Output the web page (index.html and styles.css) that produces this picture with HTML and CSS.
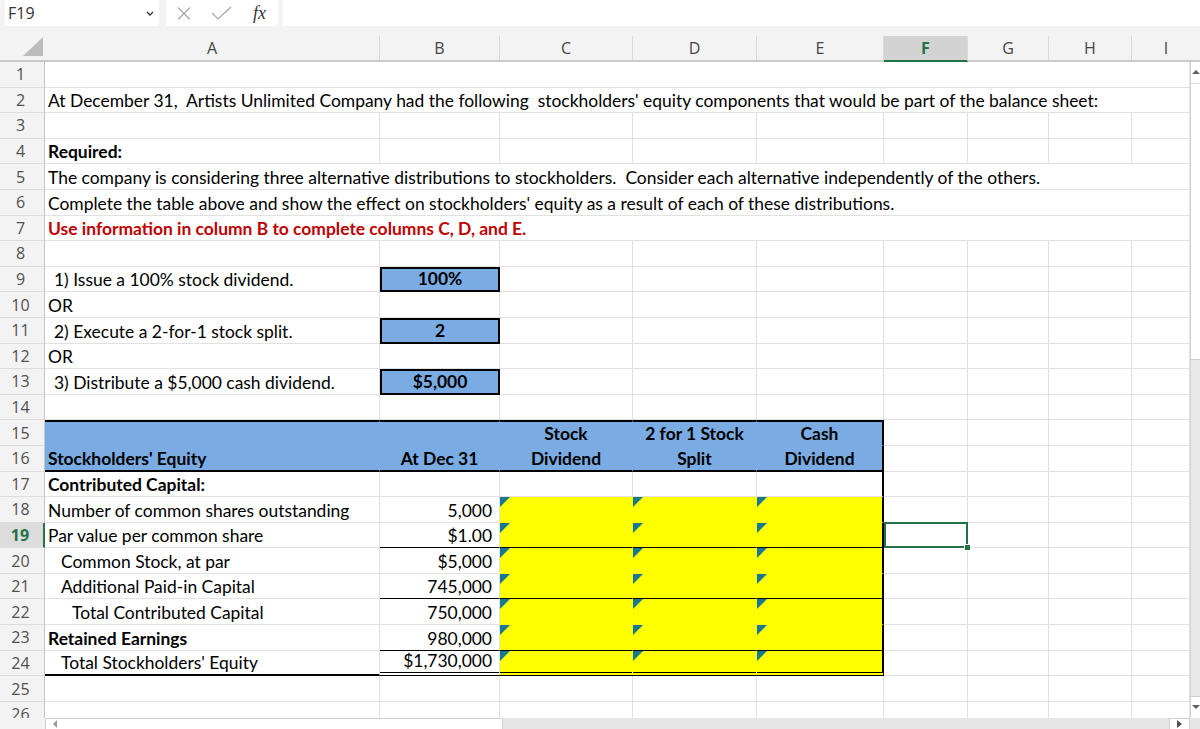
FILE: index.html
```html
<!DOCTYPE html>
<html>
<head>
<meta charset="utf-8">
<link rel="stylesheet" href="styles.css">
</head>
<body>
<div class="app">
  <div class="fbar">
    <div class="namebox"><span>F19</span><svg class="chev" width="8" height="5" viewBox="0 0 8 5"><polyline points="1,1 4,4 7,1" fill="none" stroke="#333" stroke-width="1.4"/></svg></div>
    <div class="fbtns">
      <svg class="ic-x" width="14" height="13" viewBox="0 0 14 13"><line x1="1" y1="0.5" x2="13" y2="12.5" stroke="#a6a6a6" stroke-width="1.2"/><line x1="13" y1="0.5" x2="1" y2="12.5" stroke="#a6a6a6" stroke-width="1.2"/></svg>
      <svg class="ic-ok" width="21" height="14" viewBox="0 0 21 14"><polyline points="1,7 7,13 20,1" fill="none" stroke="#a6a6a6" stroke-width="1.2"/></svg>
      <span class="fx">fx</span>
    </div>
    <div class="finput"></div>
  </div>
  <div class="colhead">
    <div class="corner"><span class="ctri"></span></div>
    <div class="ch">A</div><div class="ch">B</div><div class="ch">C</div><div class="ch">D</div><div class="ch">E</div><div class="ch sel">F</div><div class="ch">G</div><div class="ch">H</div><div class="ch last">I</div>
  </div>
  <div class="body">
    <div class="sheet">
      <div class="row"><div class="rh">1</div><div class="c s9"></div></div>
      <div class="row"><div class="rh">2</div><div class="c s9">At December 31,  Artists Unlimited Company had the following  stockholders' equity components that would be part of the balance sheet:</div></div>
      <div class="row"><div class="rh">3</div><div class="c"></div><div class="c"></div><div class="c"></div><div class="c"></div><div class="c"></div><div class="c"></div><div class="c"></div><div class="c"></div><div class="c"></div></div>
      <div class="row"><div class="rh">4</div><div class="c b">Required:</div><div class="c"></div><div class="c"></div><div class="c"></div><div class="c"></div><div class="c"></div><div class="c"></div><div class="c"></div><div class="c"></div></div>
      <div class="row"><div class="rh">5</div><div class="c s9">The company is considering three alternative distributions to stockholders.  Consider each alternative independently of the others.</div></div>
      <div class="row"><div class="rh">6</div><div class="c s9">Complete the table above and show the effect on stockholders' equity as a result of each of these distributions.</div></div>
      <div class="row"><div class="rh">7</div><div class="c s9 b red">Use information in column B to complete columns C, D, and E.</div></div>
      <div class="row"><div class="rh">8</div><div class="c"></div><div class="c"></div><div class="c"></div><div class="c"></div><div class="c"></div><div class="c"></div><div class="c"></div><div class="c"></div><div class="c"></div></div>
      <div class="row"><div class="rh">9</div><div class="c p1">1) Issue a 100% stock dividend.</div><div class="c box ctr b">100%</div><div class="c"></div><div class="c"></div><div class="c"></div><div class="c"></div><div class="c"></div><div class="c"></div><div class="c"></div></div>
      <div class="row"><div class="rh">10</div><div class="c">OR</div><div class="c"></div><div class="c"></div><div class="c"></div><div class="c"></div><div class="c"></div><div class="c"></div><div class="c"></div><div class="c"></div></div>
      <div class="row"><div class="rh">11</div><div class="c p1">2) Execute a 2-for-1 stock split.</div><div class="c box ctr b">2</div><div class="c"></div><div class="c"></div><div class="c"></div><div class="c"></div><div class="c"></div><div class="c"></div><div class="c"></div></div>
      <div class="row"><div class="rh">12</div><div class="c">OR</div><div class="c"></div><div class="c"></div><div class="c"></div><div class="c"></div><div class="c"></div><div class="c"></div><div class="c"></div><div class="c"></div></div>
      <div class="row"><div class="rh">13</div><div class="c p1">3) Distribute a $5,000 cash dividend.</div><div class="c box ctr b">$5,000</div><div class="c"></div><div class="c"></div><div class="c"></div><div class="c"></div><div class="c"></div><div class="c"></div><div class="c"></div></div>
      <div class="row"><div class="rh">14</div><div class="c"></div><div class="c"></div><div class="c"></div><div class="c"></div><div class="c"></div><div class="c"></div><div class="c"></div><div class="c"></div><div class="c"></div></div>
      <div class="row"><div class="rh">15</div><div class="c bl bt2"></div><div class="c bl bt2"></div><div class="c bl bt2 ctr hd">Stock</div><div class="c bl bt2 ctr hd">2 for 1 Stock</div><div class="c bl bt2 br2 ctr hd">Cash</div><div class="c"></div><div class="c"></div><div class="c"></div><div class="c"></div></div>
      <div class="row"><div class="rh">16</div><div class="c bl bb2 b">Stockholders' Equity</div><div class="c bl bb2 ctr hd">At Dec 31</div><div class="c bl bb2 ctr hd">Dividend</div><div class="c bl bb2 ctr hd">Split</div><div class="c bl bb2 br2 ctr hd">Dividend</div><div class="c"></div><div class="c"></div><div class="c"></div><div class="c"></div></div>
      <div class="row"><div class="rh">17</div><div class="c b">Contributed Capital:</div><div class="c"></div><div class="c"></div><div class="c"></div><div class="c br2"></div><div class="c"></div><div class="c"></div><div class="c"></div><div class="c"></div></div>
      <div class="row"><div class="rh">18</div><div class="c">Number of common shares outstanding</div><div class="c num">5,000</div><div class="c y t"></div><div class="c y t"></div><div class="c y t br2"></div><div class="c"></div><div class="c"></div><div class="c"></div><div class="c"></div></div>
      <div class="row"><div class="rh sel">19</div><div class="c">Par value per common share</div><div class="c num bb1">$1.00</div><div class="c y t bb1"></div><div class="c y t bb1"></div><div class="c y t bb1 br2"></div><div class="c cur"><span class="handle"></span></div><div class="c"></div><div class="c"></div><div class="c"></div></div>
      <div class="row"><div class="rh">20</div><div class="c p2">Common Stock, at par</div><div class="c num">$5,000</div><div class="c y t"></div><div class="c y t"></div><div class="c y t br2"></div><div class="c"></div><div class="c"></div><div class="c"></div><div class="c"></div></div>
      <div class="row"><div class="rh">21</div><div class="c p2">Additional Paid-in Capital</div><div class="c num bb1">745,000</div><div class="c y t bb1"></div><div class="c y t bb1"></div><div class="c y t bb1 br2"></div><div class="c"></div><div class="c"></div><div class="c"></div><div class="c"></div></div>
      <div class="row"><div class="rh">22</div><div class="c p3">Total Contributed Capital</div><div class="c num">750,000</div><div class="c y t"></div><div class="c y t"></div><div class="c y t br2"></div><div class="c"></div><div class="c"></div><div class="c"></div><div class="c"></div></div>
      <div class="row"><div class="rh">23</div><div class="c b">Retained Earnings</div><div class="c num bb1">980,000</div><div class="c y t bb1"></div><div class="c y t bb1"></div><div class="c y t bb1 br2"></div><div class="c"></div><div class="c"></div><div class="c"></div><div class="c"></div></div>
      <div class="row"><div class="rh">24</div><div class="c p2 bb2">Total Stockholders' Equity</div><div class="c num bbd">$1,730,000</div><div class="c y t bbd"></div><div class="c y t bbd"></div><div class="c y t bbd br2"></div><div class="c"></div><div class="c"></div><div class="c"></div><div class="c"></div></div>
      <div class="row"><div class="rh">25</div><div class="c"></div><div class="c"></div><div class="c"></div><div class="c"></div><div class="c"></div><div class="c"></div><div class="c"></div><div class="c"></div><div class="c"></div></div>
      <div class="row"><div class="rh">26</div><div class="c"></div><div class="c"></div><div class="c"></div><div class="c"></div><div class="c"></div><div class="c"></div><div class="c"></div><div class="c"></div><div class="c"></div></div>
    </div>
    <div class="vscroll">
      <div class="vs-up"><span class="arr-up"></span></div>
      <div class="vs-thumb"></div>
      <div class="vs-track"></div>
      <div class="vs-down"><span class="arr-down"></span></div>
    </div>
  </div>
  <div class="hbar">
    <div class="hb-left"></div>
    <div class="hb-tabs"><span class="arr-left"></span></div>
    <div class="hb-mid"></div>
    <div class="hb-right"><span class="arr-right"></span></div>
    <div class="hb-corner"></div>
  </div>
</div>
</body>
</html>
```
FILE: styles.css
```css
* { box-sizing: border-box; }
html, body { margin: 0; padding: 0; }
body { width: 1200px; height: 729px; overflow: hidden; background: #fff; font-family: "Open Sans", "DejaVu Sans", sans-serif; }

.app { display: flex; flex-direction: column; width: 1200px; height: 729px; }

/* formula bar */
.fbar { flex: none; height: 27px; background: #f3f3f3; display: flex; padding-left: 5px; }
.namebox { width: 154px; height: 26px; background: #fff; display: flex; align-items: center; justify-content: space-between; padding: 0 5px 0 3px; font-size: 16px; color: #333; }
.fbtns { width: 112px; height: 26px; margin-left: 7px; background: #fff; display: flex; align-items: center; padding-left: 11px; }
.ic-ok { margin-left: 20px; }
.fx { margin-left: 21px; font-family: "Liberation Serif", serif; font-style: italic; font-size: 18px; color: #333; line-height: 1; }
.finput { flex: 1; height: 26px; margin-left: 5px; background: #fff; }

/* column headers */
.colhead { flex: none; height: 35px; background: #f3f3f3; display: grid; grid-template-columns: 45px 335px 120px 133px 124px 127px 84px 81px 83px 68px; align-items: end; border-bottom: 2px solid #cacaca; }
.corner { height: 33px; position: relative; }
.ctri { position: absolute; left: 23px; top: 10px; width: 0; height: 0; border-left: 20px solid transparent; border-bottom: 19px solid #bcbcbc; }
.ch { height: 24px; border-right: 1px solid #dadada; display: flex; align-items: center; justify-content: center; font-size: 16px; color: #444; }
.ch.last { border-right: none; }
.ch.sel { background: #d3d3d3; color: #217346; font-weight: 700; height: 26px; margin-bottom: -2px; border-bottom: 2px solid #217346; }

/* body */
.body { flex: none; height: 656px; display: flex; overflow: hidden; }
.sheet { width: 1190px; flex: none; }
.row { display: grid; grid-template-columns: 45px 335px 120px 133px 124px 127px 84px 81px 83px 58px; height: 25.6px; }
.rh { background: #f3f3f3; border-right: 1px solid #c6c6c6; border-bottom: 1px solid #dcdcdc; display: flex; align-items: center; justify-content: center; padding-right: 3px; font-size: 16px; color: #505050; }
.rh.sel { background: #dcdcdc; color: #217346; font-weight: 700; border-right: 2px solid #217346; }

.c { position: relative; border-right: 1px solid #e1e1e1; border-bottom: 1px solid #e1e1e1; display: flex; align-items: flex-end; padding: 0 3px 1px 3px; font-family: Lato, "Open Sans", sans-serif; font-size: 17.45px; line-height: 20px; color: #000; white-space: pre; }
.s9 { grid-column: span 9; }
.b { font-weight: 700; }
.hd { font-weight: 700; }
.red { color: #c00000; }
.ctr { justify-content: center; }
.num { justify-content: flex-end; padding-right: 7px; }
.p1 { padding-left: 9px; }
.p2 { padding-left: 16px; }
.p3 { padding-left: 27px; }

.bl { background: #7aabe3; border-right-color: transparent; border-bottom-color: transparent; }
.y { background: #ffff00; border-right-color: transparent; border-bottom-color: transparent; }
.box { background: #7aabe3; border: 2px solid #000; }
.bt2 { border-top: 2px solid #000; }
.bb2 { border-bottom: 2px solid #000; }
.bb1 { border-bottom: 1px solid #000; }
.bbd { border-bottom: 4px double #000; }
.br2 { border-right: 2px solid #000; }

.t::before { content: ""; position: absolute; left: 0; top: 0; width: 0; height: 0; border-top: 10px solid #17788f; border-right: 10px solid transparent; }

.cur::after { content: ""; position: absolute; left: 0; top: -1px; right: -1px; bottom: -1px; border: 2px solid #217346; }
.handle { position: absolute; right: -4px; bottom: -4px; width: 7px; height: 7px; background: #217346; border: 1px solid #fff; z-index: 2; }

/* vertical scrollbar */
.vscroll { width: 10px; flex: none; background: #e8e8e8; border-left: 1px solid #d4d4d4; display: flex; flex-direction: column; }
.vs-up { height: 22px; background: #fff; border-bottom: 1px solid #e0e0e0; display: flex; justify-content: center; padding-top: 8px; }
.vs-thumb { height: 276px; background: #fff; border-bottom: 1px solid #d0d0d0; }
.vs-track { flex: 1; }
.vs-down { height: 22px; background: #fff; border-top: 1px solid #d0d0d0; display: flex; justify-content: center; align-items: flex-end; padding-bottom: 9px; }
.arr-up { width: 0; height: 0; border-left: 4px solid transparent; border-right: 4px solid transparent; border-bottom: 4px solid #606060; }
.arr-down { width: 0; height: 0; border-left: 4px solid transparent; border-right: 4px solid transparent; border-top: 4px solid #606060; }

/* horizontal bar */
.hbar { flex: none; height: 11px; display: flex; background: #e6e6e6; }
.hb-left { width: 45px; background: #f3f3f3; }
.hb-tabs { width: 458px; background: #fff; border: 1px solid #cfcfcf; border-bottom: none; display: flex; align-items: center; padding-left: 7px; }
.hb-mid { flex: 1; }
.hb-right { width: 21px; background: #fff; border: 1px solid #cfcfcf; border-bottom: none; display: flex; align-items: center; justify-content: center; }
.hb-corner { width: 10px; }
.arr-left { width: 0; height: 0; border-top: 4px solid transparent; border-bottom: 4px solid transparent; border-right: 4px solid #9a9a9a; }
.arr-right { width: 0; height: 0; border-top: 4px solid transparent; border-bottom: 4px solid transparent; border-left: 5px solid #505050; }
```
